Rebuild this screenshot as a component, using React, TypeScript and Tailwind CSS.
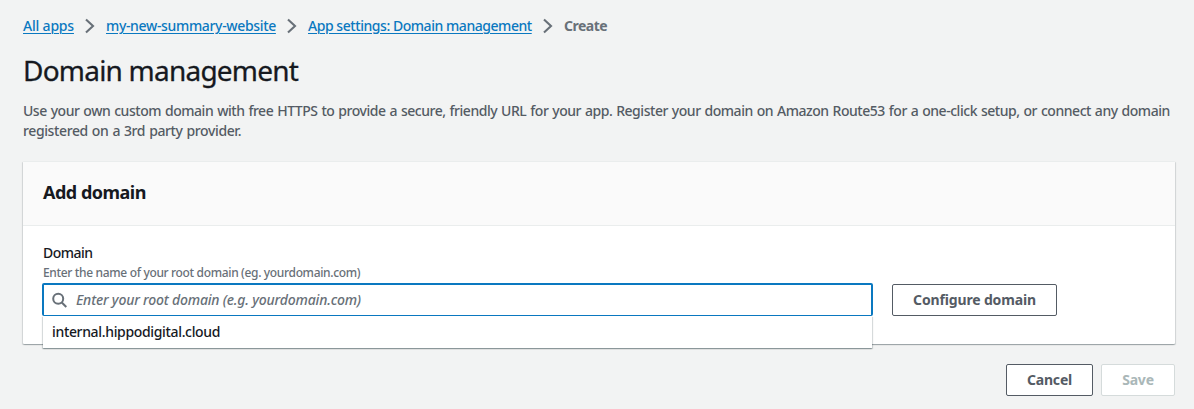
import React from "react";

function Chevron() {
  return (
    <svg className="mx-[11px] h-4 w-[10px] shrink-0" viewBox="0 0 10 16" fill="none" stroke="#687078" strokeWidth="2.1">
      <path d="M1 1.5 8 8 1 14.5" />
    </svg>
  );
}

const link = "whitespace-nowrap text-[#0a78c0] underline decoration-1 underline-offset-2";
const button =
  "flex h-8 shrink-0 items-center justify-center rounded-[2px] border bg-white text-[14px] font-bold";

export default function App() {
  return (
    <main className="h-[409px] w-full overflow-hidden bg-[#f2f3f3] pl-[23px] pr-[19px] pt-4 font-['Noto_Sans',sans-serif] text-[14px] font-medium leading-5 text-[#16191f]">
      <nav className="flex h-5 items-center">
        <a className={`${link} w-[51px] tracking-[-0.2px]`}>All apps</a>
        <Chevron />
        <a className={`${link} w-[170px] tracking-[-0.34px]`}>my-new-summary-website</a>
        <Chevron />
        <a className={`${link} w-[224px] tracking-[-0.45px]`}>App settings: Domain management</a>
        <Chevron />
        <span className="font-bold tracking-[-0.5px] text-[#687078]">Create</span>
      </nav>
      <h1 className="mt-4 h-9 whitespace-nowrap text-[28px] font-normal leading-9 tracking-[-0.78px] [-webkit-text-stroke:0.3px_#16191f]">Domain management</h1>
      <p className="mt-[13px] whitespace-nowrap tracking-[-0.46px] text-[#545b64] [word-spacing:0.7px]">
        Use your own custom domain with free HTTPS to provide a secure, friendly URL for your app. Register your domain on Amazon Route53 for a one-click setup, or connect any domain
        <br />
        <span className="tracking-[-0.38px]">registered on a 3rd party provider.</span>
      </p>
      <section className="mt-5 h-[183px] rounded-[1px] border-t border-[#eaeded] bg-white shadow-[0_1px_1px_0_rgba(0,28,36,0.2),1px_1px_1px_0_rgba(0,28,36,0.12),-1px_1px_1px_0_rgba(0,28,36,0.12)]">
        <header className="flex h-[64px] items-center border-b border-[#eaeded] bg-[#fafafa] px-5 pb-1">
          <h2 className="text-[18px] font-bold tracking-[-0.5px]">Add domain</h2>
        </header>
        <div className="px-5 pt-[17px]">
          <label className="block h-5 tracking-[-0.5px]">Domain</label>
          <p className="h-[20px] pt-px text-[12px] leading-[18px] tracking-[-0.34px] text-[#687078]">
            Enter the name of your root domain (eg. yourdomain.com)
          </p>
          <div className="flex gap-[19px]">
            <div className="relative -ml-px w-[831px]">
              <div className="relative z-10 flex h-[33px] items-center rounded-[2px] border-2 border-b border-[#0a78c0] bg-white pl-2">
                <svg className="h-4 w-4" viewBox="0 0 16 16" fill="none" stroke="#687078" strokeWidth="2">
                  <circle cx="6.2" cy="6.7" r="5" />
                  <path d="m9.8 10.5 4.5 4.5" />
                </svg>
                <span className="ml-2 whitespace-nowrap italic tracking-[-0.2px] text-[#687078]">
                  Enter your root domain (e.g. yourdomain.com)
                </span>
              </div>
              <div className="absolute left-px right-px top-[33px] flex h-8 items-center bg-white pb-px pl-[9px] tracking-[-0.34px] shadow-[0_1px_1px_0_rgba(0,28,36,0.25),1px_1px_1px_0_rgba(0,28,36,0.12),-1px_1px_1px_0_rgba(0,28,36,0.12)]">
                internal.hippodigital.cloud
              </div>
            </div>
            <button className={`${button} mt-px w-[165px] border-[#545b64] tracking-[-0.15px] text-[#545b64]`}>
              Configure domain
            </button>
          </div>
        </div>
      </section>
      <footer className="mt-5 flex justify-end gap-2">
        <button className={`${button} w-[87px] border-[#545b64] tracking-[-0.2px] text-[#545b64]`}>Cancel</button>
        <button className={`${button} w-[74px] border-[#d5dbdb] tracking-[-0.2px] text-[#aab7b8]`}>Save</button>
      </footer>
    </main>
  );
}
